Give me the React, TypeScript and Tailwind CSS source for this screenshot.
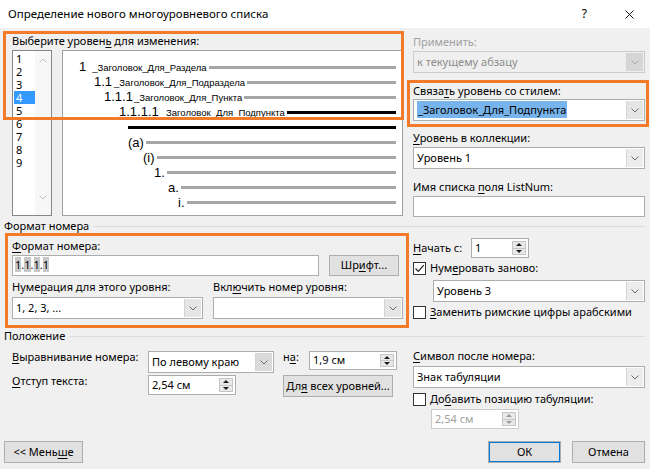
import type { ReactNode } from 'react'

function U({ children }: { children: ReactNode }) {
  return <span className="underline underline-offset-[2px] decoration-1">{children}</span>
}

function Chevron({ up, color = '#6b6b6b' }: { up?: boolean; color?: string }) {
  return (
    <svg width="8" height="5" viewBox="0 0 8 5">
      <path d={up ? 'M0.5 4.5 L4 1 L7.5 4.5' : 'M0.5 0.5 L4 4 L7.5 0.5'} stroke={color} strokeWidth="1" fill="none" />
    </svg>
  )
}

function Combo({
  className = '',
  children,
  disabled,
  btn = 'bg-[#ececec]',
}: {
  className?: string
  children?: ReactNode
  disabled?: boolean
  btn?: string
}) {
  return (
    <div
      className={`flex h-[22px] border ${
        disabled ? 'border-[#cccccc] bg-[#efefef] text-[#8d8d8d]' : 'border-[#adadad] bg-white'
      } ${className}`}
    >
      <div className="flex-1 flex items-center pl-[3px] overflow-hidden whitespace-nowrap">
        <span>{children}</span>
      </div>
      <div className={`w-[17px] my-[1px] mr-[1px] flex items-center justify-center border-l border-[#d4d4d4] ${btn}`}>
        <Chevron color={disabled ? '#a8a8a8' : '#6b6b6b'} />
      </div>
    </div>
  )
}

function Spin({ className = '', children, disabled }: { className?: string; children?: ReactNode; disabled?: boolean }) {
  const tri = disabled ? '#9a9a9a' : '#1a1a1a'
  return (
    <div
      className={`flex border bg-white ${
        disabled ? 'border-[#cccccc] text-[#a0a0a0]' : 'border-[#adadad]'
      } ${className}`}
    >
      <div className="flex-1 flex items-center pl-[3px] whitespace-nowrap">
        <span>{children}</span>
      </div>
      <div className="w-[14px] my-[2px] mr-[2px] flex flex-col border border-[#c6c6c6] bg-[#e8e8e8]">
        <div className="flex-1 flex items-center justify-center border-b border-[#c6c6c6]">
          <svg width="6" height="3" viewBox="0 0 6 3">
            <path d="M0 3 L3 0 L6 3 Z" fill={tri} />
          </svg>
        </div>
        <div className="flex-1 flex items-center justify-center">
          <svg width="6" height="3" viewBox="0 0 6 3">
            <path d="M0 0 L6 0 L3 3 Z" fill={tri} />
          </svg>
        </div>
      </div>
    </div>
  )
}

function Check({ checked, className = '', children }: { checked?: boolean; className?: string; children: ReactNode }) {
  return (
    <div className={`flex items-center h-[14px] ${className}`}>
      <div className="w-[13px] h-[13px] border border-[#333333] bg-white flex items-center justify-center">
        {checked && (
          <svg width="11" height="11" viewBox="0 0 11 11">
            <path d="M1.5 5.5 L4.3 8.3 L9.8 2.2" stroke="#222" strokeWidth="1.2" fill="none" />
          </svg>
        )}
      </div>
      <span className="ml-[4px] leading-[14px] whitespace-nowrap">{children}</span>
    </div>
  )
}

function Btn({ className = '', children }: { className?: string; children: ReactNode }) {
  return (
    <div className={`flex items-center justify-center border border-[#adadad] bg-[#e1e1e1] ${className}`}>
      <span className="whitespace-nowrap">{children}</span>
    </div>
  )
}

function Label({ className = '', children }: { className?: string; children: ReactNode }) {
  return <div className={`h-[16px] leading-[16px] whitespace-nowrap ${className}`}>{children}</div>
}

function GroupHeader({ className = '', title }: { className?: string; title: string }) {
  return (
    <div className={`flex items-center h-[16px] ${className}`}>
      <span className="pr-[4px] leading-[16px]">{title}</span>
      <div className="flex-1 h-px bg-[#dcdcdc]" />
    </div>
  )
}

const preview = [
  { pad: 'pl-[16px]', num: '1', label: '_Заголовок_Для_Раздела', gap: 'ml-[6px]', line: 'bg-[#a6a6a6]' },
  { pad: 'pl-[31px]', num: '1.1', label: '_Заголовок_Для_Подраздела', gap: 'ml-[2px]', line: 'bg-[#a6a6a6]' },
  { pad: 'pl-[41px]', num: '1.1.1', label: '_Заголовок_Для_Пункта', gap: 'ml-[1px]', line: 'bg-[#a6a6a6]' },
  { pad: 'pl-[56px]', num: '1.1.1.1', label: '_Заголовок_Для_Подпункта', gap: 'ml-[2px]', line: 'bg-black' },
  { pad: 'pl-[65px]', num: '', label: '', gap: '', line: 'bg-black' },
  { pad: 'pl-[65px]', num: '(a)', label: '', gap: '', line: 'bg-[#a6a6a6]' },
  { pad: 'pl-[80px]', num: '(i)', label: '', gap: '', line: 'bg-[#a6a6a6]' },
  { pad: 'pl-[91px]', num: '1.', label: '', gap: '', line: 'bg-[#a6a6a6]' },
  { pad: 'pl-[105px]', num: 'a.', label: '', gap: '', line: 'bg-[#a6a6a6]' },
  { pad: 'pl-[115px]', num: 'i.', label: '', gap: '', line: 'bg-[#a6a6a6]' },
]

export default function App() {
  return (
    <div className="relative w-[650px] h-[469px] overflow-hidden bg-[#f0f0f0] text-black text-[11px] font-['Noto_Sans',sans-serif] flex flex-col">
      {/* title bar */}
      <div className="h-[28px] bg-white flex items-center pl-[8px] text-[11.5px]">
        <span>Определение нового многоуровневого списка</span>
        <span className="ml-auto text-[12px]">?</span>
        <span className="ml-[38px] mr-[16px] flex">
          <svg width="9" height="9" viewBox="0 0 9 9">
            <path d="M0.5 0.5 L8.5 8.5 M8.5 0.5 L0.5 8.5" stroke="#111" strokeWidth="1" />
          </svg>
        </span>
      </div>

      <div className="flex-1 flex flex-col pl-[4px] pr-[5px]">
        {/* levels + preview */}
        <div className="grid grid-cols-[391px_232px] gap-x-[10px] pl-[8px]">
          <div className="pt-[5px]">
            <Label>
              Выберите уровен<U>ь</U> для изменения:
            </Label>
            <div className="flex gap-[10px] mt-[1px] h-[166px]">
              <div className="w-[40px] border border-[#828790] bg-white flex">
                <div className="flex-1 flex flex-col pt-[1px] pl-[1px]">
                  {['1', '2', '3', '4', '5', '6', '7', '8', '9'].map((n) => (
                    <div
                      key={n}
                      className={`h-[13px] leading-[13px] pl-[2px] text-[11px] ${n === '4' ? 'bg-[#3399ff] text-white' : ''}`}
                    >
                      {n}
                    </div>
                  ))}
                </div>
                <div className="w-[16px] bg-[#f7f7f7] flex flex-col items-center pt-[7px] pb-[15px] justify-between">
                  <Chevron up color="#c2c2c2" />
                  <Chevron color="#c2c2c2" />
                </div>
              </div>
              <div className="flex-1 border border-[#a0a0a0] bg-white pt-[9px] pr-[6px] font-['Liberation_Sans',Arial,sans-serif]">
                {preview.map((r, i) => (
                  <div key={i} className={`h-[15px] flex items-center ${r.pad}`}>
                    {r.num && (
                      <span className="flex items-baseline whitespace-nowrap">
                        <span className="text-[13px] leading-[15px]">{r.num}</span>
                        {r.label && <span className={`text-[9.5px] ${r.gap}`}>{r.label}</span>}
                      </span>
                    )}
                    <div className={`flex-1 h-[3px] ${r.num ? 'ml-[2px]' : ''} ${r.line}`} />
                  </div>
                ))}
              </div>
            </div>
          </div>

          <div className="pt-[6px] flex flex-col">
            <Label className="text-[#a0a0a0]">Применить:</Label>
            <Combo disabled className="mt-[1px]" btn="bg-[#d6d6d6]">
              к текущему абзацу
            </Combo>
            <Label className="mt-[10px]">
              Связа<U>т</U>ь уровень со стилем:
            </Label>
            <Combo btn="bg-[#e5e5e5]">
              <span className="bg-[#78b4ec] px-[1px] py-[1px]">_Заголовок_Для_Подпункта</span>
            </Combo>
            <Label className="mt-[9px]">
              <U>У</U>ровень в коллекции:
            </Label>
            <Combo className="mt-[1px]">Уровень 1</Combo>
            <Label className="mt-[10px]">
              Имя списка <U>п</U>оля ListNum:
            </Label>
            <div className="h-[21px] mt-[1px] border border-[#adadad] bg-white" />
          </div>
        </div>

        <GroupHeader className="mt-[1px]" title="Формат номера" />

        {/* number format */}
        <div className="grid grid-cols-[391px_232px] gap-x-[10px] pl-[8px]">
          <div className="flex flex-col">
            <Label className="mt-[4px]">
              <U>Ф</U>ормат номера:
            </Label>
            <div className="flex mt-[1px]">
              <div className="w-[307px] h-[21px] border border-[#adadad] bg-white flex items-center pl-[2px]">
                <span>
                  <span className="bg-[#c8c8c8]">1</span>.<span className="bg-[#c8c8c8]">1</span>.
                  <span className="bg-[#c8c8c8]">1</span>.<span className="bg-[#c8c8c8]">1</span>
                </span>
              </div>
              <Btn className="ml-[10px] w-[70px] h-[21px]">
                Шр<U>и</U>фт...
              </Btn>
            </div>
            <div className="grid grid-cols-[191px_190px] gap-x-[10px] mt-[3px]">
              <Label>
                Нуме<U>р</U>ация для этого уровня:
              </Label>
              <Label>
                Вкл<U>ю</U>чить номер уровня:
              </Label>
              <Combo className="mt-[2px]" btn="bg-[#e5e5e5]">
                1, 2, 3, ...
              </Combo>
              <Combo className="mt-[2px]" btn="bg-[#e5e5e5]" />
            </div>
          </div>

          <div className="flex flex-col">
            <div className="flex items-center mt-[4px] h-[20px]">
              <span className="w-[58px] whitespace-nowrap">
                <U>Н</U>ачать с:
              </span>
              <Spin className="w-[58px] h-[20px]">1</Spin>
            </div>
            <Check checked className="mt-[3px]">
              Нум<U>е</U>ровать заново:
            </Check>
            <Combo className="mt-[5px] ml-[20px]">Уровень 3</Combo>
            <Check className="mt-[3px]">
              <U>З</U>аменить римские цифры арабскими
            </Check>
          </div>
        </div>

        <GroupHeader className="mt-[9px]" title="Положение" />

        {/* position */}
        <div className="grid grid-cols-[391px_232px] gap-x-[10px] pl-[8px]">
          <div className="flex flex-col">
            <div className="flex items-start mt-[7px]">
              <span className="w-[136px] leading-[12px] whitespace-nowrap">
                <U>В</U>ыравнивание номера:
              </span>
              <Combo className="w-[126px] h-[21px]" btn="bg-[#dadada]">
                По левому краю
              </Combo>
              <span className="ml-[9px] w-[26px] leading-[12px]">
                н<U>а</U>:
              </span>
              <Spin className="w-[88px] h-[19px]">1,9 см</Spin>
            </div>
            <div className="flex items-start mt-[2px]">
              <span className="w-[136px] leading-[12px] whitespace-nowrap">
                <U>О</U>тступ текста:
              </span>
              <Spin className="w-[88px] h-[20px]">2,54 см</Spin>
              <Btn className="ml-[47px] w-[110px] h-[22px]">
                Дл<U>я</U> всех уровней...
              </Btn>
            </div>
          </div>

          <div className="flex flex-col">
            <Label className="mt-[4px]">
              <U>С</U>имвол после номера:
            </Label>
            <Combo className="mt-[2px]">Знак табуляции</Combo>
            <Check className="mt-[4px]">
              До<U>б</U>авить позицию табуляции:
            </Check>
            <Spin disabled className="ml-[18px] mt-[3px] w-[88px] h-[20px]">
              2,54 см
            </Spin>
          </div>
        </div>

        {/* bottom buttons */}
        <div className="mt-auto mb-[6px] flex">
          <Btn className="w-[79px] h-[22px]">
            &lt;&lt; Мень<U>ш</U>е
          </Btn>
          <Btn className="ml-auto w-[73px] h-[22px] border-[#0078d7] shadow-[inset_0_0_0_1px_#0078d7]">ОК</Btn>
          <Btn className="ml-[11px] w-[73px] h-[22px]">Отмена</Btn>
        </div>
      </div>

      {/* annotation frames */}
      <div className="absolute left-[3px] top-[31px] w-[401px] h-[89px] border-[3px] border-[#f27b29] pointer-events-none" />
      <div className="absolute left-[407px] top-[80px] w-[242px] h-[47px] border-[3px] border-[#f27b29] pointer-events-none" />
      <div className="absolute left-[5px] top-[233px] w-[404px] h-[95px] border-[3px] border-[#f27b29] pointer-events-none" />
    </div>
  )
}
